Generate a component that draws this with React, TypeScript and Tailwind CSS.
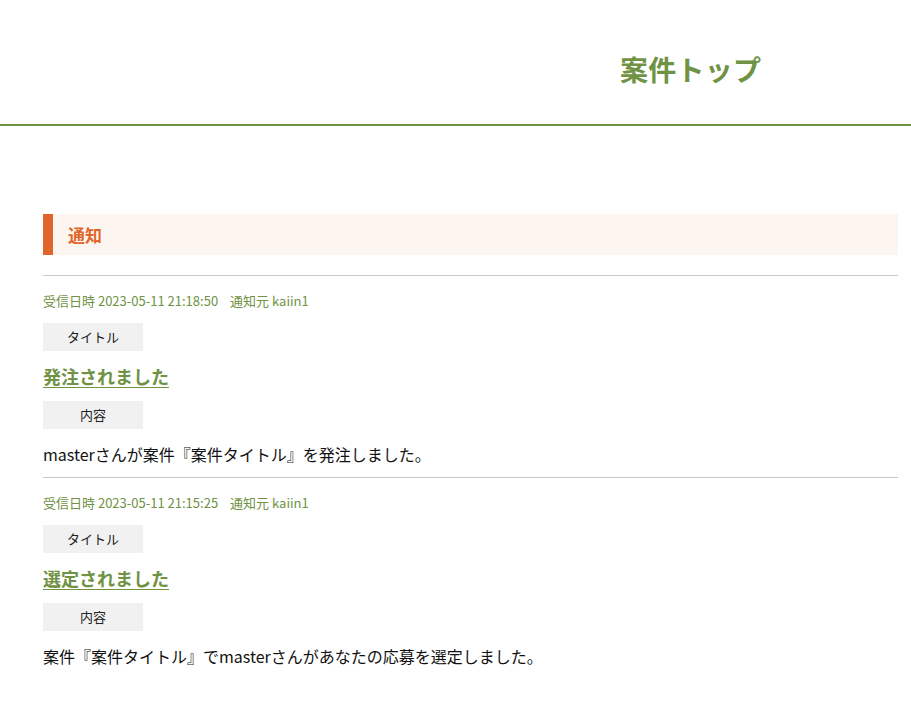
const FONT = "font-['Noto_Sans_CJK_JP','Noto_Sans',sans-serif]";

const notices = [
  {
    date: "2023-05-11 21:18:50",
    from: "kaiin1",
    title: "発注されました",
    body: "masterさんが案件『案件タイトル』を発注しました。",
  },
  {
    date: "2023-05-11 21:15:25",
    from: "kaiin1",
    title: "選定されました",
    body: "案件『案件タイトル』でmasterさんがあなたの応募を選定しました。",
  },
];

function Label({ children }: { children: React.ReactNode }) {
  return (
    <div className="w-[100px] h-[28px] bg-[#f1f1f1] flex items-center justify-center text-[13px] text-[#222]">
      {children}
    </div>
  );
}

export default function App() {
  return (
    <div className={`${FONT} bg-white min-h-[706px] w-[911px]`}>
      {/* Header */}
      <header className="h-[126px] border-b-2 border-[#6f9244] flex items-start">
        <h1 className="mt-[49px] ml-[620px] text-[28px] font-bold text-[#6f9244] leading-[40px] tracking-[0.01em]">
          案件トップ
        </h1>
      </header>

      <main className="pl-[43px] pr-[13px] pt-[88px]">
        {/* Section heading */}
        <div className="h-[41px] bg-[#fdf5f0] border-l-[10px] border-[#e0652a] flex items-center pl-[15px]">
          <h2 className="text-[17px] font-bold text-[#e0652a]">通知</h2>
        </div>

        <div className="mt-[20px]">
          {notices.map((n, i) => (
            <div key={i} className="border-t border-[#c8c8c8] pt-[16px] pb-[11px]">
              <p className="text-[13px] text-[#6f9244] leading-[18px]">
                受信日時 {n.date}
                <span className="ml-[12px]">通知元 {n.from}</span>
              </p>
              <div className="mt-[13px]">
                <Label>タイトル</Label>
              </div>
              <a
                href="#"
                className="block mt-[11px] text-[18px] font-bold text-[#6f9244] underline underline-offset-[3px] leading-[28px] w-fit"
              >
                {n.title}
              </a>
              <div className="mt-[11px]">
                <Label>内容</Label>
              </div>
              <p className="mt-[13px] text-[16px] text-[#111] leading-[24px]">{n.body}</p>
            </div>
          ))}
        </div>
      </main>
    </div>
  );
}
